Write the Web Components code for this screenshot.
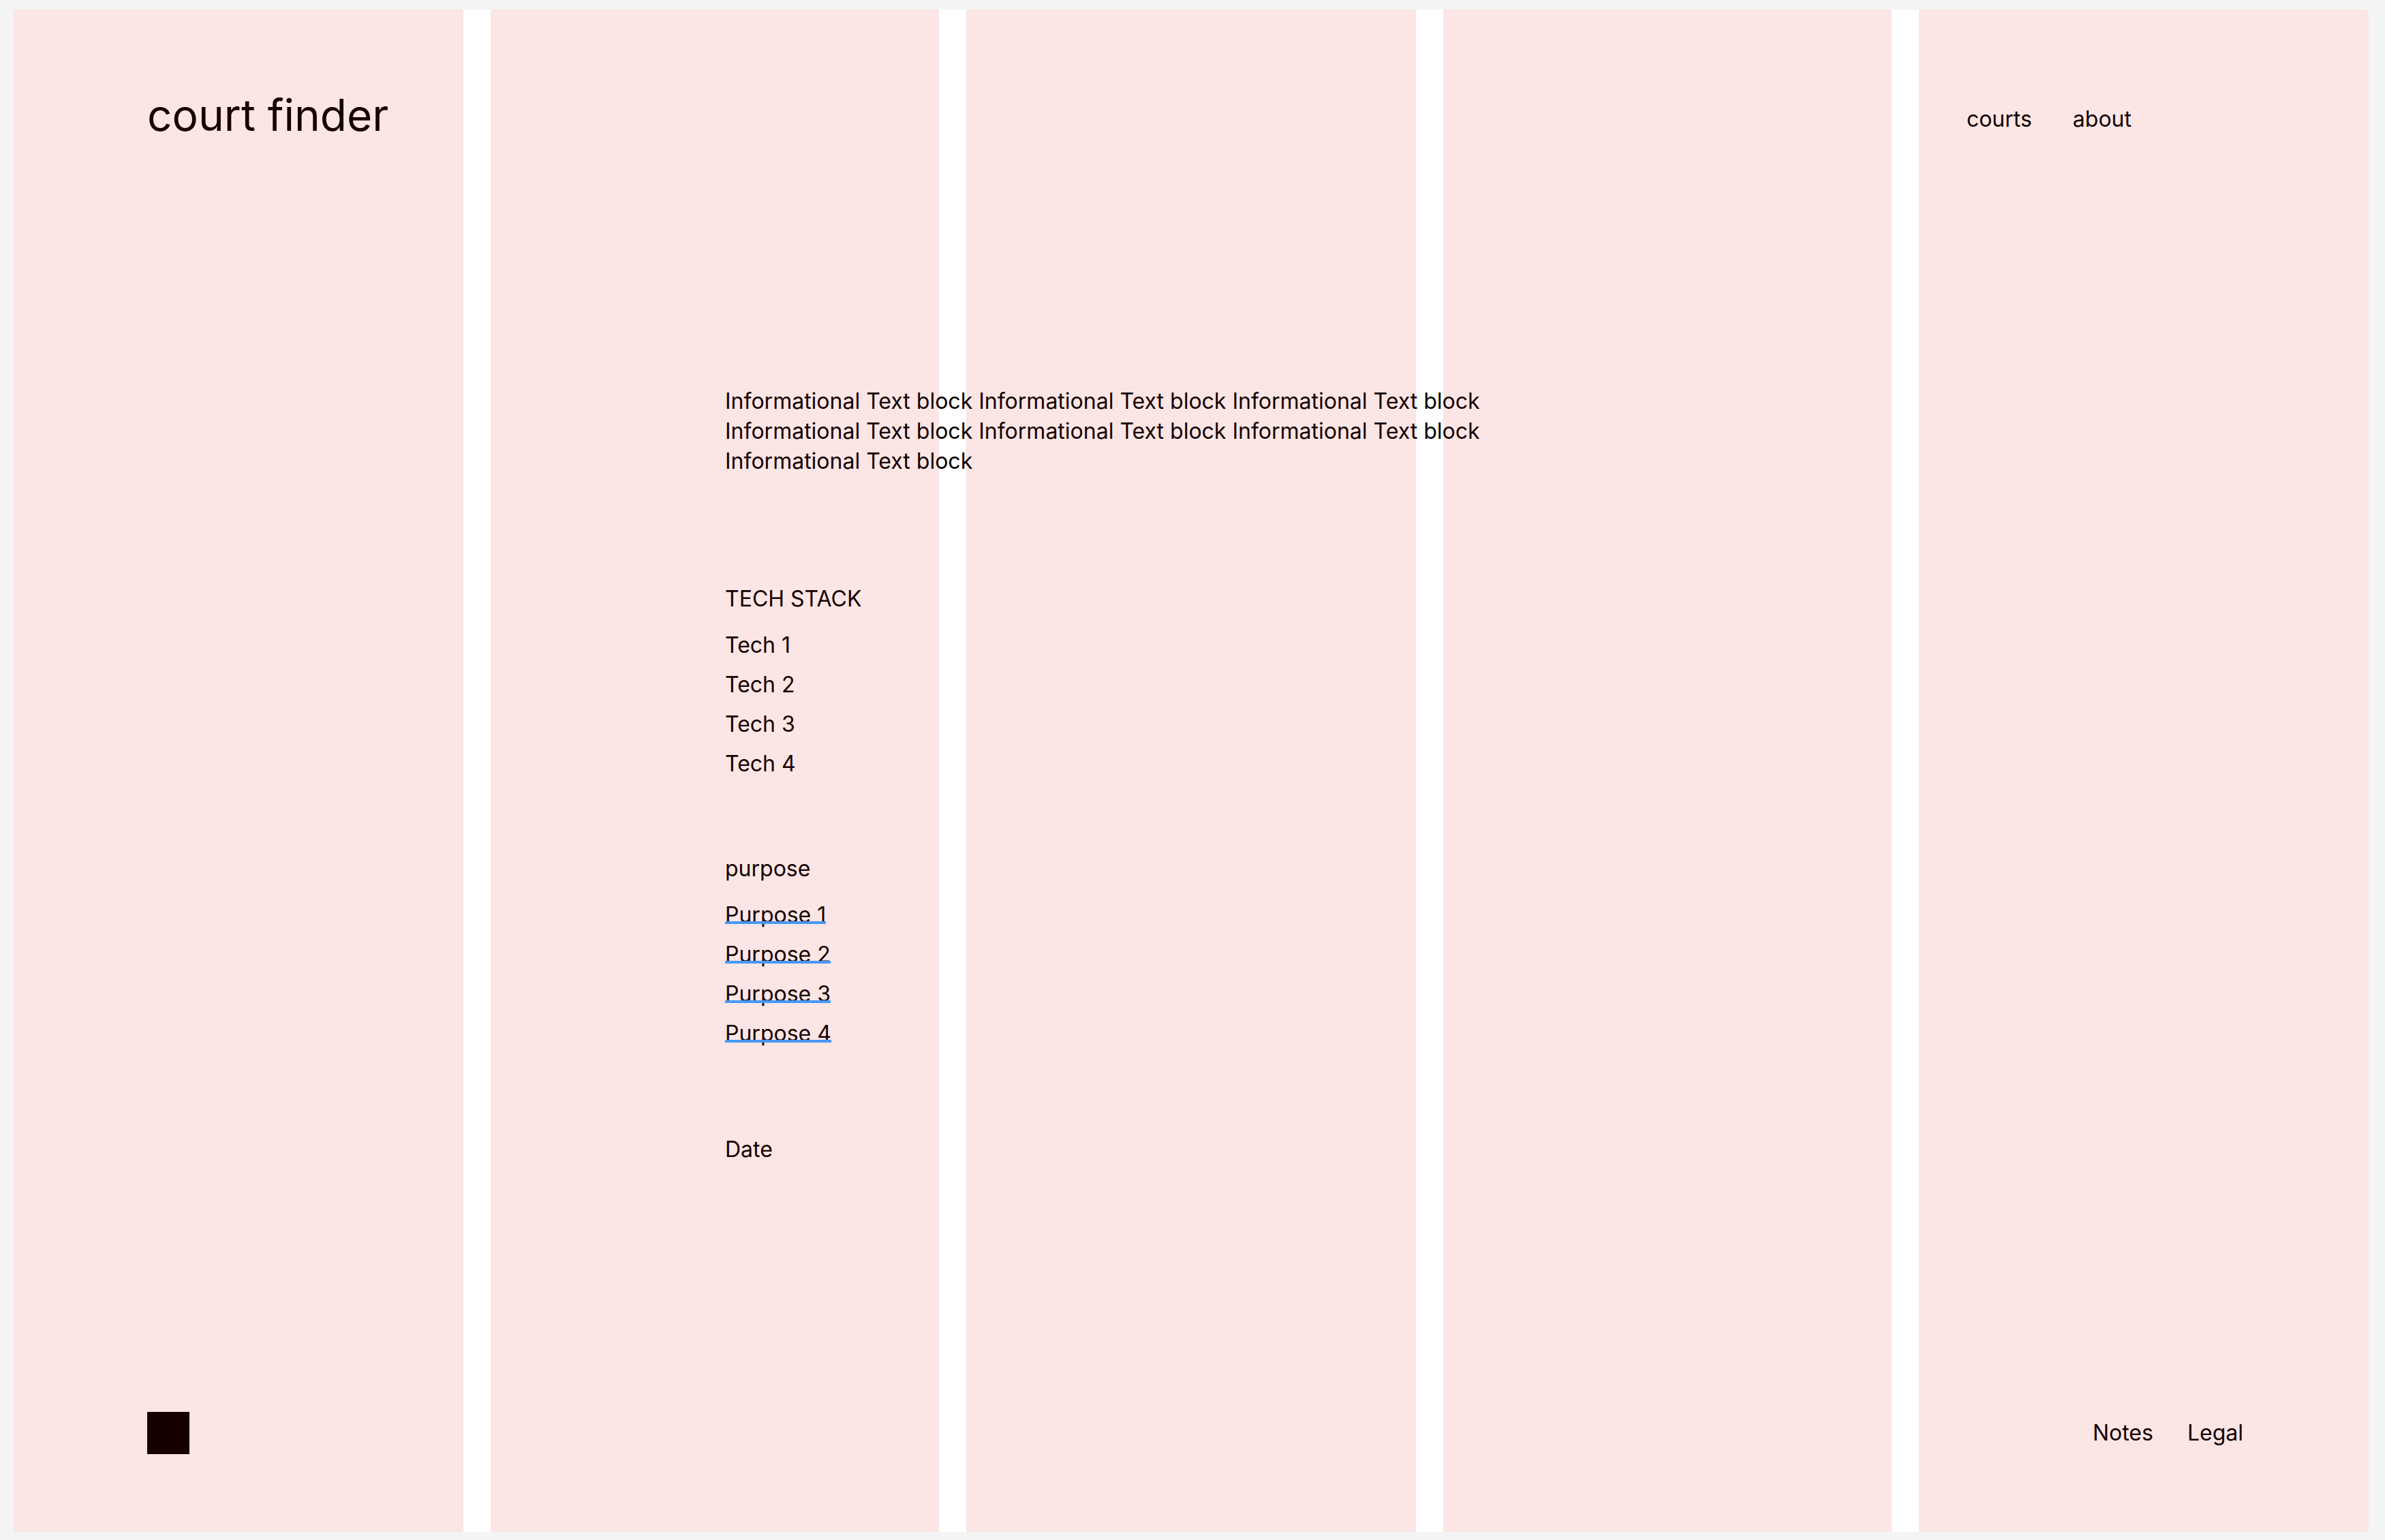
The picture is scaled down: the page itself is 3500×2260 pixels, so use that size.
<!DOCTYPE html>
<html lang="en">
<head>
<meta charset="utf-8">
<title>court finder</title>
<style>
  body {
    margin: 0;
    background: #f4f4f4;
    color: #000;
    font-family: Inter, "Liberation Sans", sans-serif;
    font-size: 32px;
    line-height: 40px;
  }
</style>
</head>
<body>
<page-frame>
  <site-header slot="header" name="court finder">
    <link-row label="Main" style="--gap: 60px">
      <a href="#courts">courts</a>
      <a href="#about">about</a>
    </link-row>
  </site-header>
  <info-column>
    <p>Informational Text block Informational Text block Informational Text block Informational Text block Informational Text block Informational Text block Informational Text block</p>
    <item-list heading="TECH STACK">
      <li>Tech 1</li>
      <li>Tech 2</li>
      <li>Tech 3</li>
      <li>Tech 4</li>
    </item-list>
    <item-list heading="purpose">
      <li><underlined-link href="#purpose-1">Purpose 1</underlined-link></li>
      <li><underlined-link href="#purpose-2">Purpose 2</underlined-link></li>
      <li><underlined-link href="#purpose-3">Purpose 3</underlined-link></li>
      <li><underlined-link href="#purpose-4">Purpose 4</underlined-link></li>
    </item-list>
    <time>Date</time>
  </info-column>
  <site-footer slot="footer">
    <link-row label="Footer" style="--gap: 50px">
      <a href="#notes">Notes</a>
      <a href="#legal">Legal</a>
    </link-row>
  </site-footer>
</page-frame>

<script>
  const define = (name, html, setup) => {
    const template = document.createElement('template');
    template.innerHTML = html;
    customElements.define(name, class extends HTMLElement {
      constructor() {
        super();
        this.attachShadow({ mode: 'open' }).append(template.content.cloneNode(true));
        if (setup) setup(this, this.shadowRoot);
      }
    });
  };

  define('page-frame', `
    <style>
      :host { display: flex; box-sizing: border-box; min-height: 100vh; padding: 14px 24px 12px 20px; }
      .page { position: relative; flex: 1; display: flex; flex-direction: column; background: #fff; }
      main { flex: 1; }
      /* tinted layout grid, laid over the content */
      .grid { position: absolute; inset: 0; display: grid; grid-template-columns: 330fr 329fr 330fr 329fr 330fr; gap: 40px; pointer-events: none; }
      .grid i { background: rgba(217, 5, 0, 0.1); }
    </style>
    <div class="page">
      <slot name="header"></slot>
      <main><slot></slot></main>
      <slot name="footer"></slot>
      <div class="grid" aria-hidden="true"><i></i><i></i><i></i><i></i><i></i></div>
    </div>`);

  define('site-header', `
    <style>
      :host { display: flex; justify-content: space-between; align-items: flex-start; padding: 116px 348px 0 196px; }
      h1 { margin: 0; font-size: 64px; line-height: 78px; font-weight: 400; }
      .nav { padding-top: 25px; }
    </style>
    <h1></h1>
    <div class="nav"><slot></slot></div>`,
    (host, root) => { root.querySelector('h1').textContent = host.getAttribute('name'); });

  define('link-row', `
    <style>
      :host { display: block; }
      nav { display: flex; gap: var(--gap); }
      ::slotted(a) { color: inherit; text-decoration: none; }
    </style>
    <nav><slot></slot></nav>`,
    (host, root) => { root.querySelector('nav').setAttribute('aria-label', host.getAttribute('label')); });

  define('info-column', `
    <style>
      :host { display: flex; flex-direction: column; align-items: flex-start; padding: 359px 0 0 1044px; max-width: 1120px; }
      ::slotted(p) { margin: 0 0 46px; line-height: 44px; }
      ::slotted(item-list) { margin-top: 114px; }
      ::slotted(time) { margin-top: 130px; }
    </style>
    <slot></slot>`);

  define('item-list', `
    <style>
      :host { display: block; }
      h2 { margin: 0 0 28px; font: inherit; }
      ul { display: flex; flex-direction: column; gap: 18px; margin: 0; padding: 0; list-style: none; }
      ::slotted(li) { display: block; }
    </style>
    <h2></h2>
    <ul><slot></slot></ul>`,
    (host, root) => { root.querySelector('h2').textContent = host.getAttribute('heading'); });

  define('underlined-link', `
    <style>
      :host { display: block; width: fit-content; }
      a { position: relative; display: block; color: inherit; text-decoration: none; }
      /* the rule crosses the letters at their baseline */
      a::after { content: ""; position: absolute; z-index: 1; left: 0; right: 0; bottom: 7px; height: 4px; background: #4698fa; }
    </style>
    <a><slot></slot></a>`,
    (host, root) => { root.querySelector('a').setAttribute('href', host.getAttribute('href')); });

  define('site-footer', `
    <style>
      :host { display: flex; justify-content: space-between; align-items: center; padding: 0 184px 114px 196px; }
      .mark { display: block; width: 62px; height: 62px; background: #000; }
    </style>
    <span class="mark"></span>
    <slot></slot>`);
</script>
</body>
</html>
